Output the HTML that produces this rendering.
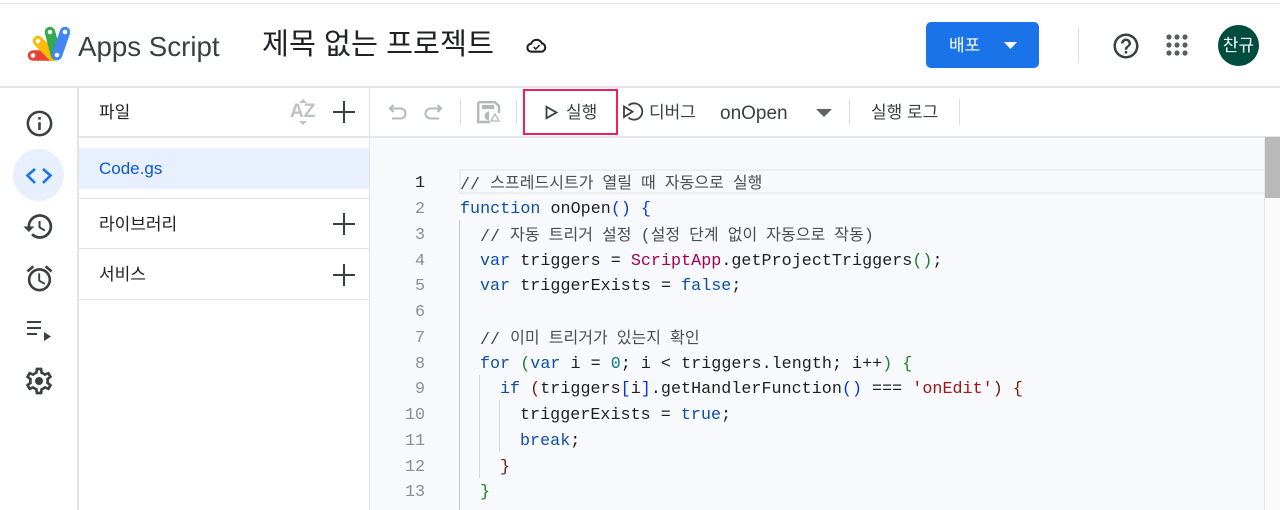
<!DOCTYPE html>
<html lang="ko"><head><meta charset="utf-8"><title>Apps Script</title>
<style>
*{box-sizing:border-box}
html,body{margin:0;padding:0;width:1280px;height:510px;overflow:hidden;background:#fff}
body{position:relative;font-family:"Liberation Sans","Noto Sans CJK KR",sans-serif;color:#202124}
.a{position:absolute;white-space:pre}
.b{position:absolute;background:#e1e3e6}
svg{position:absolute;display:block}
.t{font-size:17px;line-height:24px;color:#202124}
.gl{font-size:17px;line-height:24px;color:#3c4043}
.code{position:absolute;left:0;top:2px;width:1264px;height:508px;overflow:hidden}
.l{position:absolute;white-space:pre;font-family:"Liberation Mono",monospace;font-size:16.7px;letter-spacing:.04px;line-height:25.75px;height:25.75px;color:#1f1f1f}
.n{position:absolute;width:34px;left:391px;text-align:right;font-family:"Liberation Mono",monospace;font-size:16.7px;line-height:25.75px;color:#8a8d91}
.c{color:#3f4246;margin-top:-1.5px}
.k{position:relative;top:-.5px;font-family:"Noto Sans CJK KR",sans-serif;font-size:16px;word-spacing:4.5px;color:#4a4d51}
.m{font-family:"Liberation Mono",monospace;font-size:16.7px}
.kw{color:#0b4fa8}.p{color:#a3004f}.g{color:#1b7f2a}.bl{color:#0a36d9}.r{color:#6b1d0c}.s{color:#a31515}.num{color:#0b7c80}
</style></head><body>
<!-- top strip -->
<div class="b" style="left:0;top:3px;width:1280px;height:1px;background:#e4e4e4"></div>
<div class="b" style="left:0;top:86px;width:1280px;height:2px;background:#e3e5e8"></div>
<!-- logo -->
<svg style="left:0;top:0" width="80" height="80" viewBox="0 0 80 80">
<g fill="none" stroke-linecap="round" stroke-width="10.5">
<path d="M33 55.500H53" stroke="#ea4335"/>
<path d="M38 41L53 56" stroke="#fbbc04"/>
<path d="M50 32L56 55" stroke="#34a853"/>
<path d="M65 32L57 55" stroke="#4285f4"/>
</g>
<g fill="#fff"><circle cx="33" cy="55.500" r="2.300"/><circle cx="38" cy="41" r="2.300"/><circle cx="50" cy="32" r="2.300"/><circle cx="65" cy="32" r="2.300"/><circle cx="57" cy="55" r="2.300"/></g>
</svg>
<div class="a" style="left:78px;top:29px;font-size:27.700px;line-height:36px;color:#3c4043">Apps Script</div>
<div class="a" style="left:262px;top:25px;font-size:29.300px;line-height:40px;color:#202124">제목 없는 프로젝트</div>
<svg style="left:525px;top:34px" width="23" height="23" viewBox="0 0 24 24" fill="none" stroke="#202124" stroke-width="2.200"><path d="M7 18.500a4.200 4.200 0 0 1-.6-8.400A6 6 0 0 1 17.600 9.700 4.500 4.500 0 0 1 17.500 18.500z"/><path d="M9 13.500l2.200 2.200 4-4" stroke-width="1.600"/></svg>
<!-- deploy -->
<div class="a" style="left:926px;top:22px;width:113px;height:46px;background:#1a73e8;border-radius:5px"></div>
<div class="a" style="left:949px;top:34px;font-size:17px;line-height:24px;color:#fff">배포</div>
<svg style="left:1003px;top:41px" width="15" height="9"><path d="M1 1h13L7.500 8z" fill="#fff"/></svg>
<div class="b" style="left:1078px;top:28px;width:1px;height:35px;background:#dadce0"></div>
<svg style="left:1110.500px;top:30.500px" width="30" height="30" viewBox="0 0 24 24" fill="#3c4043"><path d="M11 18h2v-2h-2v2zm1-16C6.480 2 2 6.480 2 12s4.480 10 10 10 10-4.480 10-10S17.520 2 12 2zm0 18c-4.410 0-8-3.590-8-8s3.590-8 8-8 8 3.590 8 8-3.590 8-8 8zm0-14c-2.210 0-4 1.790-4 4h2c0-1.100.9-2 2-2s2 .9 2 2c0 2-3 1.750-3 5h2c0-2.250 3-2.500 3-5 0-2.210-1.790-4-4-4z"/></svg>
<svg style="left:1165px;top:33px" width="24" height="24" fill="#5a5e62"><circle cx="4" cy="4" r="2.600"/><circle cx="12" cy="4" r="2.600"/><circle cx="20" cy="4" r="2.600"/><circle cx="4" cy="12" r="2.600"/><circle cx="12" cy="12" r="2.600"/><circle cx="20" cy="12" r="2.600"/><circle cx="4" cy="20" r="2.600"/><circle cx="12" cy="20" r="2.600"/><circle cx="20" cy="20" r="2.600"/></svg>
<div class="a" style="left:1218px;top:25px;width:41px;height:41px;border-radius:50%;background:#004d40;color:#fff;font-size:17px;line-height:41px;text-align:center">찬규</div>
<!-- rail -->
<div class="b" style="left:77px;top:88px;width:2px;height:422px;background:#e3e5e8"></div>
<svg style="left:23.500px;top:108px" width="31" height="31" viewBox="0 0 24 24" fill="#3c4043"><path d="M11 7h2v2h-2zm0 4h2v6h-2zm1-9C6.480 2 2 6.480 2 12s4.480 10 10 10 10-4.480 10-10S17.520 2 12 2zm0 18c-4.410 0-8-3.590-8-8s3.590-8 8-8 8 3.590 8 8-3.590 8-8 8z"/></svg>
<div class="a" style="left:13px;top:149px;width:51px;height:52px;border-radius:50%;background:#e8f0fe"></div>
<svg style="left:25px;top:165px" width="28" height="20" fill="none" stroke="#1a73e8" stroke-width="2.600"><path d="M10 4L2.500 10.500 10 18M18 4l7.500 6.500L18 18"/></svg>
<svg style="left:21.500px;top:210px" width="33" height="33" viewBox="0 0 24 24" fill="#3c4043"><path d="M13 3a9 9 0 0 0-9 9H1l3.890 3.890.07.14L9 12H6c0-3.870 3.130-7 7-7s7 3.130 7 7-3.130 7-7 7c-1.930 0-3.680-.79-4.940-2.060l-1.420 1.420A8.954 8.954 0 0 0 13 21a9 9 0 0 0 0-18zm-1 5v5l4.280 2.540.72-1.210-3.500-2.080V8H12z"/></svg>
<svg style="left:24px;top:263px" width="31" height="31" viewBox="0 0 24 24" fill="#3c4043"><path d="M22 5.720l-4.600-3.860-1.290 1.530 4.600 3.860L22 5.720zM7.880 3.390L6.600 1.860 2 5.710l1.290 1.530 4.590-3.850zM12.500 8H11v6l4.750 2.850.75-1.230-4-2.370V8zM12 4c-4.970 0-9 4.030-9 9s4.020 9 9 9c4.970 0 9-4.030 9-9s-4.030-9-9-9zm0 16c-3.870 0-7-3.130-7-7s3.130-7 7-7 7 3.130 7 7-3.130 7-7 7z"/></svg>
<svg style="left:26px;top:321px" width="27" height="22" fill="#3c4043"><rect x="1" y="0" width="14" height="2"/><rect x="1" y="6" width="14" height="2"/><rect x="1" y="12" width="10" height="2"/><path d="M18 11l7 4.500-7 4.500z"/></svg>
<svg style="left:23px;top:365px" width="32" height="32" viewBox="0 0 24 24" fill="#3c4043"><path d="M19.430 12.980c.04-.32.07-.64.07-.98 0-.34-.03-.66-.07-.98l2.110-1.650c.19-.15.24-.42.12-.64l-2-3.460c-.09-.16-.26-.25-.44-.25-.06 0-.12.01-.17.03l-2.490 1c-.52-.4-1.080-.73-1.690-.98l-.38-2.650C14.460 2.180 14.250 2 14 2h-4c-.25 0-.46.18-.49.42l-.38 2.650c-.61.25-1.170.59-1.690.98l-2.490-1c-.06-.02-.12-.03-.18-.03-.17 0-.34.09-.43.25l-2 3.460c-.13.22-.07.49.12.64l2.110 1.650c-.04.32-.07.65-.07.98 0 .33.03.66.07.98l-2.110 1.650c-.19.15-.24.42-.12.64l2 3.460c.09.16.26.25.44.25.06 0 .12-.01.17-.03l2.490-1c.52.4 1.080.73 1.690.98l.38 2.650c.03.24.24.42.49.42h4c.25 0 .46-.18.49-.42l.38-2.650c.61-.25 1.170-.59 1.690-.98l2.490 1c.06.02.12.03.18.03.17 0 .34-.09.43-.25l2-3.460c.12-.22.07-.49-.12-.64l-2.110-1.650zm-1.980-1.710c.04.31.05.52.05.73 0 .21-.02.43-.05.73l-.14 1.130.89.7 1.080.84-.7 1.210-1.270-.51-1.040-.42-.9.68c-.43.32-.84.56-1.250.73l-1.060.43-.16 1.130-.2 1.350h-1.400l-.19-1.350-.16-1.130-1.060-.43c-.43-.18-.83-.41-1.230-.71l-.91-.7-1.060.43-1.270.51-.7-1.210 1.080-.84.89-.7-.14-1.130c-.03-.31-.05-.54-.05-.74s.02-.43.05-.73l.14-1.130-.89-.7-1.080-.84.7-1.210 1.270.51 1.040.42.9-.68c.43-.32.84-.56 1.250-.73l1.060-.43.16-1.130.2-1.350h1.390l.19 1.350.16 1.130 1.060.43c.43.18.83.41 1.230.71l.91.7 1.060-.43 1.270-.51.7 1.210-1.070.85-.89.7.14 1.130z"/><circle cx="12" cy="12" r="3"/></svg>
<!-- files panel -->
<div class="b" style="left:369px;top:88px;width:1px;height:422px"></div>
<div class="a t" style="left:99px;top:101px">파일</div>
<div class="a" style="left:290px;top:102px;font-size:19px;line-height:20px;font-weight:bold;color:#bdc1c6">AZ</div>
<svg style="left:296px;top:98px" width="14" height="28" fill="#bdc1c6"><path d="M7 1l4 4H3zM7 27l-4-4h8z"/></svg>
<svg style="left:333px;top:101px" width="22" height="22" fill="#3c4043"><rect x="0" y="10" width="22" height="2"/><rect x="10" y="0" width="2" height="22"/></svg>
<div class="b" style="left:79px;top:136px;width:290px;height:2px;background:#e3e5e8"></div>
<div class="a" style="left:79px;top:148px;width:290px;height:41px;background:#e8f0fe"></div>
<div class="a" style="left:99px;top:157px;font-size:17px;line-height:24px;color:#0b57d0">Code.gs</div>
<div class="b" style="left:79px;top:198px;width:290px;height:1px"></div>
<div class="a t" style="left:99px;top:213px">라이브러리</div>
<svg style="left:333px;top:213px" width="22" height="22" fill="#3c4043"><rect x="0" y="10" width="22" height="2"/><rect x="10" y="0" width="2" height="22"/></svg>
<div class="b" style="left:79px;top:248px;width:290px;height:1px"></div>
<div class="a t" style="left:99px;top:263px">서비스</div>
<svg style="left:333px;top:264px" width="22" height="22" fill="#3c4043"><rect x="0" y="10" width="22" height="2"/><rect x="10" y="0" width="2" height="22"/></svg>
<div class="b" style="left:79px;top:299px;width:290px;height:1px"></div>
<!-- toolbar -->
<div class="b" style="left:370px;top:136px;width:910px;height:2px;background:#e3e5e8"></div>
<svg style="left:386px;top:100px" width="24" height="24" viewBox="0 0 24 24" fill="none" stroke="#b4b8bd" stroke-width="2"><path d="M7.500 12L4 8.500 7.500 5M4.500 8.500h10a5 5 0 0 1 0 10H6"/></svg>
<svg style="left:421px;top:100px" width="24" height="24" viewBox="0 0 24 24" fill="none" stroke="#b4b8bd" stroke-width="2"><path d="M16.500 12l3.500-3.500L16.500 5M19.500 8.500H9.500a5 5 0 0 0 0 10H18"/></svg>
<div class="b" style="left:460px;top:99px;width:1px;height:26px;background:#dadce0"></div>
<svg style="left:476px;top:100px" width="26" height="24" viewBox="0 0 26 24"><path d="M2.200 2.200H19L23 6v7M14 22H2.200V2.200" fill="none" stroke="#b4b8bd" stroke-width="2.400"/><rect x="6" y="5" width="12" height="4" fill="#b4b8bd"/><path d="M13 11.500a4.500 4.500 0 0 0 0 9z" fill="#b4b8bd"/><circle cx="19" cy="18" r="6" fill="#fff"/><path d="M19 14l4 7h-8z" fill="none" stroke="#b4b8bd" stroke-width="1.300"/></svg>
<div class="b" style="left:516px;top:99px;width:1px;height:26px;background:#dadce0"></div>
<div class="a" style="left:523px;top:89px;width:95px;height:46px;border:2px solid #f01d5f"></div>
<svg style="left:545px;top:105px" width="14" height="15" fill="none" stroke="#3c4043" stroke-width="1.800"><path d="M1.500 1.800l10 5.700-10 5.700z"/></svg>
<div class="a gl" style="left:566px;top:101px">실행</div>
<svg style="left:622px;top:101px" width="22" height="22" viewBox="0 0 22 22" fill="none" stroke="#3c4043" stroke-width="1.800"><path d="M6.500 4.500A8.200 8.200 0 1 1 6.500 16.500"/><path d="M2 5.500v10.500l8.500-5.250z"/></svg>
<div class="a gl" style="left:649px;top:101px">디버그</div>
<div class="a" style="left:720px;top:102px;font-size:19px;line-height:24px;color:#3c4043">onOpen</div>
<svg style="left:816px;top:108px" width="17" height="10"><path d="M0 1h16L8 9z" fill="#5f6368"/></svg>
<div class="b" style="left:849px;top:99px;width:1px;height:26px;background:#dadce0"></div>
<div class="a gl" style="left:871px;top:101px">실행 로그</div>
<div class="b" style="left:959px;top:99px;width:1px;height:26px;background:#dadce0"></div>
<!-- editor -->
<div class="a" style="left:370px;top:138px;width:910px;height:372px;background:#f8f9fc"></div>
<div class="a" style="left:1264px;top:138px;width:16px;height:372px;background:#fbfbfc;border-left:1px solid #e8e9eb"></div>
<div class="a" style="left:1265px;top:137px;width:15px;height:61px;background:#b9b9b9"></div>
<div class="a" style="left:459px;top:169px;width:805px;height:25px;border:1px solid #eceded;border-width:2px 0 2px 2px"></div>
<div class="b" style="left:459px;top:220px;width:1px;height:290px;background:#c6c8cb"></div>
<div class="b" style="left:479px;top:375px;width:1px;height:103px;background:#d6d8da"></div>
<div class="b" style="left:499px;top:400px;width:1px;height:52px;background:#d6d8da"></div>
<div class="code">
<div class="n" style="top:167px;color:#202124;margin-top:2px">1</div>
<div class="n" style="top:195px">2</div>
<div class="n" style="top:221px">3</div>
<div class="n" style="top:247px">4</div>
<div class="n" style="top:272px">5</div>
<div class="n" style="top:298px">6</div>
<div class="n" style="top:324px">7</div>
<div class="n" style="top:350px">8</div>
<div class="n" style="top:375px">9</div>
<div class="n" style="top:401px">10</div>
<div class="n" style="top:427px">11</div>
<div class="n" style="top:453px">12</div>
<div class="n" style="top:478px">13</div>
<div class="l c" style="left:460px;top:169px">// <span class="k">스프레드시트가 열릴 때 자동으로 실행</span></div>
<div class="l" style="left:460px;top:195px"><span class="kw">function</span> onOpen<span class="bl">()</span> <span class="bl">{</span></div>
<div class="l c" style="left:480px;top:221px">// <span class="k">자동 트리거 설정 <span class="m">(</span>설정 단계 없이 자동으로 작동<span class="m">)</span></span></div>
<div class="l" style="left:480px;top:247px"><span class="kw">var</span> triggers = <span class="p">ScriptApp</span>.getProjectTriggers<span class="g">()</span>;</div>
<div class="l" style="left:480px;top:272px"><span class="kw">var</span> triggerExists = <span class="kw">false</span>;</div>
<div class="l c" style="left:480px;top:324px">// <span class="k">이미 트리거가 있는지 확인</span></div>
<div class="l" style="left:480px;top:350px"><span class="kw">for</span> <span class="g">(</span><span class="kw">var</span> i = <span class="num">0</span>; i &lt; triggers.length; i++<span class="g">)</span> <span class="g">{</span></div>
<div class="l" style="left:500px;top:375px"><span class="kw">if</span> <span class="r">(</span>triggers<span class="bl">[</span>i<span class="bl">]</span>.getHandlerFunction<span class="bl">()</span> === <span class="s">'onEdit'</span><span class="r">)</span> <span class="r">{</span></div>
<div class="l" style="left:520px;top:401px">triggerExists = <span class="kw">true</span>;</div>
<div class="l" style="left:520px;top:427px"><span class="kw">break</span>;</div>
<div class="l r" style="left:500px;top:453px">}</div>
<div class="l g" style="left:480px;top:478px">}</div>
</div>
</body></html>
